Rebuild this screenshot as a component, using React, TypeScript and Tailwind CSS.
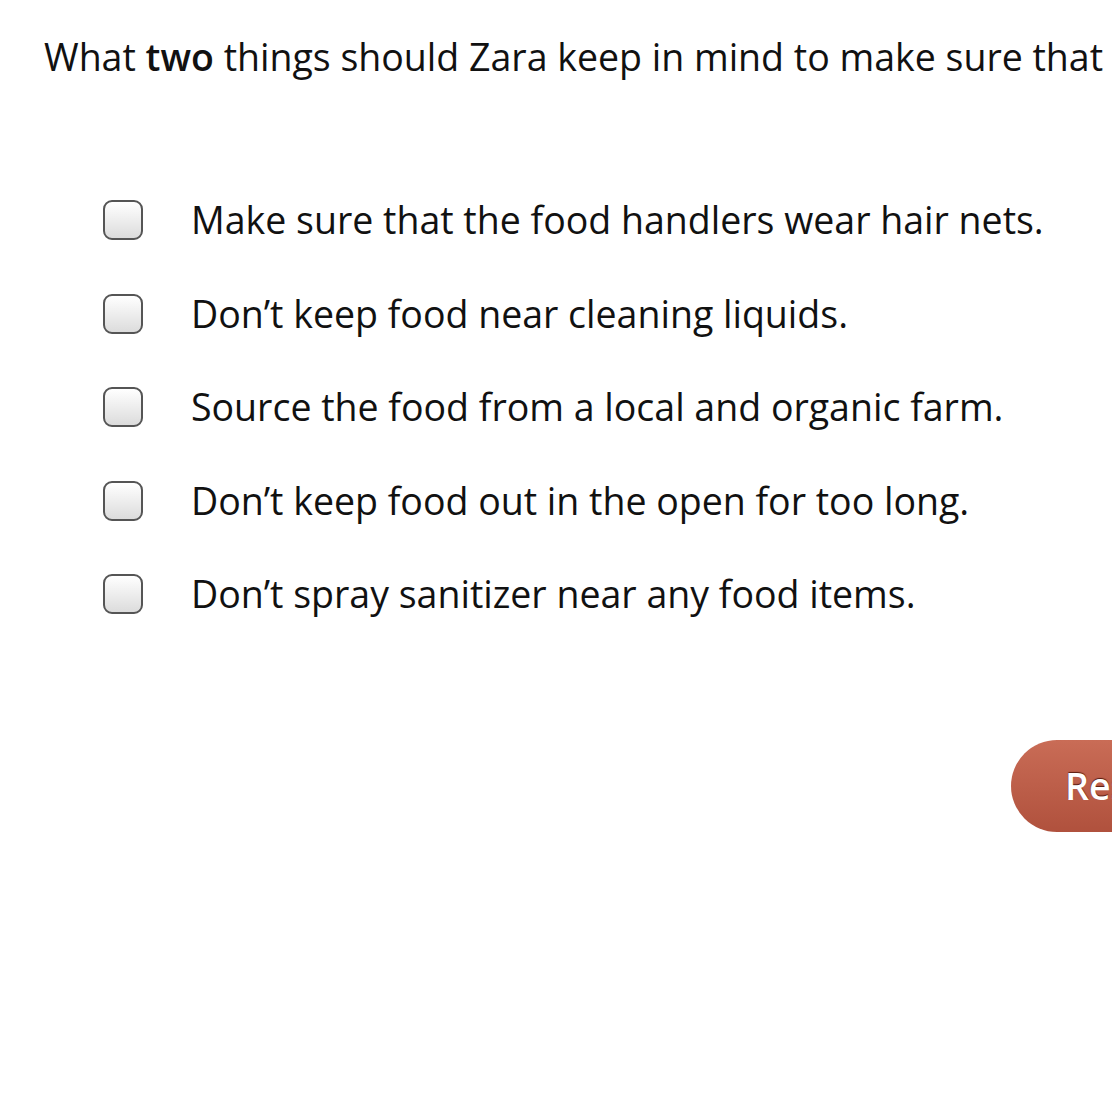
const options = [
  'Make sure that the food handlers wear hair nets.',
  'Don’t keep food near cleaning liquids.',
  'Source the food from a local and organic farm.',
  'Don’t keep food out in the open for too long.',
  'Don’t spray sanitizer near any food items.',
];

export default function App() {
  return (
    <div
      className="h-[1111px] w-[1112px] overflow-hidden bg-white text-[#111] whitespace-nowrap"
      style={{ fontFamily: '"Open Sans", sans-serif' }}
    >
      <p className="pl-[44px] pt-[34px] text-[37.5px] leading-[46px]">
        What <span className="font-semibold">two</span> things should Zara keep in mind to make sure that
      </p>

      <ul className="mt-[120px] flex flex-col gap-[53.5px] pl-[103px]">
        {options.map((opt) => (
          <li key={opt} className="flex h-[40px] items-center">
            <span className="h-[40px] w-[40px] shrink-0 rounded-[9px] border-2 border-[#555] bg-gradient-to-b from-white to-[#dcdcdc]" />
            <span className="ml-[48px] text-[37.5px] leading-[40px]">{opt}</span>
          </li>
        ))}
      </ul>

      <div className="mt-[126px] flex justify-end">
        <button className="-mr-[60px] h-[92px] w-[161px] rounded-full bg-gradient-to-b from-[#c96c56] to-[#b0513d] pl-[54px] text-left text-[37.5px] font-semibold text-white [text-shadow:0_-1px_1px_rgba(60,10,0,0.8)]">
          Reset
        </button>
      </div>
    </div>
  );
}
